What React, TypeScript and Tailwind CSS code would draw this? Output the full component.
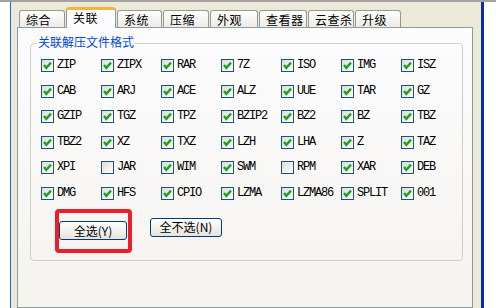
import React from 'react'

const ROWS: [string, boolean][][] = [
  [['ZIP', true], ['ZIPX', true], ['RAR', true], ['7Z', true], ['ISO', true], ['IMG', true], ['ISZ', true]],
  [['CAB', true], ['ARJ', true], ['ACE', true], ['ALZ', true], ['UUE', true], ['TAR', true], ['GZ', true]],
  [['GZIP', true], ['TGZ', true], ['TPZ', true], ['BZIP2', true], ['BZ2', true], ['BZ', true], ['TBZ', true]],
  [['TBZ2', true], ['XZ', true], ['TXZ', true], ['LZH', true], ['LHA', true], ['Z', true], ['TAZ', true]],
  [['XPI', true], ['JAR', false], ['WIM', true], ['SWM', true], ['RPM', false], ['XAR', true], ['DEB', true]],
  [['DMG', true], ['HFS', true], ['CPIO', true], ['LZMA', true], ['LZMA86', true], ['SPLIT', true], ['001', true]],
]

const TABS = [
  { label: '综合', w: 'w-[46px]' },
  { label: '关联', w: 'w-[50px]', active: true },
  { label: '系统', w: 'w-[45px]' },
  { label: '压缩', w: 'w-[46px]' },
  { label: '外观', w: 'w-[48px]' },
  { label: '查看器', w: 'w-[48px]' },
  { label: '云查杀', w: 'w-[46px]' },
  { label: '升级', w: 'w-[46px]' },
]

const cjk = "font-['Noto_Sans_CJK_SC',sans-serif]"

function XpCheck({ checked }: { checked: boolean }) {
  return (
    <span className="w-[13px] h-[13px] shrink-0 border border-[#1c5180] bg-linear-to-br from-[#dcdcd7] to-white flex items-center justify-center">
      {checked && (
        <svg width="11" height="11" viewBox="0 0 11 11">
          <path d="M2 5 L4.3 7.8 L9 2.6" fill="none" stroke="#21a121" strokeWidth="2.4" />
        </svg>
      )}
    </span>
  )
}

function XpButton({ label, w }: { label: string; w: string }) {
  return (
    <button
      className={`${w} h-[19px] rounded-[3px] border border-[#003c74] bg-linear-to-b from-white to-[#e6e4dc] text-[12px] leading-[16px] text-black ${cjk}`}
    >
      {label}
    </button>
  )
}

export default function App() {
  return (
    <div className="w-[496px] h-[308px] overflow-hidden flex bg-white border-t-2 border-[#a3a3a3]">
      <div className="w-[10px] bg-white" />
      <div className="w-px bg-[#2a5bd7]" />
      <div className="w-[470px] bg-[#ece9d8] pl-[6px] pr-[8px] pt-[5px] flex flex-col">
        {/* tab strip */}
        <div className="flex items-end gap-px h-[20px] pl-[2px]">
          {TABS.map((t) =>
            t.active ? (
              <div
                key={t.label}
                className={`${t.w} h-[21px] relative z-10 -mb-px rounded-t-[3px] border border-b-0 border-[#919b9c] border-t-[3px] border-t-[#f5b53c] bg-[#fcfcfe] pl-[6px] text-[12px] tracking-[0.5px] whitespace-nowrap leading-[16px] text-black ${cjk}`}
              >
                {t.label}
              </div>
            ) : (
              <div
                key={t.label}
                className={`${t.w} h-[17px] rounded-t-[3px] border border-b-0 border-[#919b9c] bg-linear-to-b from-white to-[#ecebe6] pl-[6px] text-[12px] tracking-[0.5px] whitespace-nowrap leading-[17px] text-black ${cjk}`}
              >
                {t.label}
              </div>
            )
          )}
        </div>

        {/* tab page */}
        <div className="flex-1 border border-[#919b9c] bg-linear-to-b from-[#fcfcfe] to-[#f4f3ee] pt-[15px] pl-[12px] pr-[9px]">
          <div className="relative h-[218px] rounded-[4px] border border-[#d0d0bf] pl-[10px] pt-[15px]">
            <span className={`absolute left-[6px] top-[-10px] px-[1px] bg-[#fbfbfc] text-[12px] leading-[16px] text-[#0046d5] ${cjk}`}>
              关联解压文件格式
            </span>

            <div className="grid grid-cols-[repeat(7,60px)] auto-rows-[25.6px]">
              {ROWS.flat().map(([name, on]) => (
                <div key={name} className="flex items-center gap-[3px] h-[13px]">
                  <XpCheck checked={on} />
                  <span className="font-['Liberation_Mono',monospace] text-[12px] tracking-[-1.2px] leading-[13px] text-black">
                    {name}
                  </span>
                </div>
              ))}
            </div>

            <div className="flex gap-[23px] pl-[18px] mt-[5px]">
              <div className="relative">
                <XpButton label="全选(Y)" w="w-[68px]" />
                <span className="pointer-events-none absolute -left-[4px] -right-[5px] -top-[9px] -bottom-[11px] rounded-[4px] border-4 border-[#ee1d2b]" />
              </div>
              <XpButton label="全不选(N)" w="w-[72px]" />
            </div>
          </div>
        </div>
      </div>
      <div className="w-[3px] bg-[#0b2ca3]" />
      <div className="w-[12px] bg-white" />
    </div>
  )
}
